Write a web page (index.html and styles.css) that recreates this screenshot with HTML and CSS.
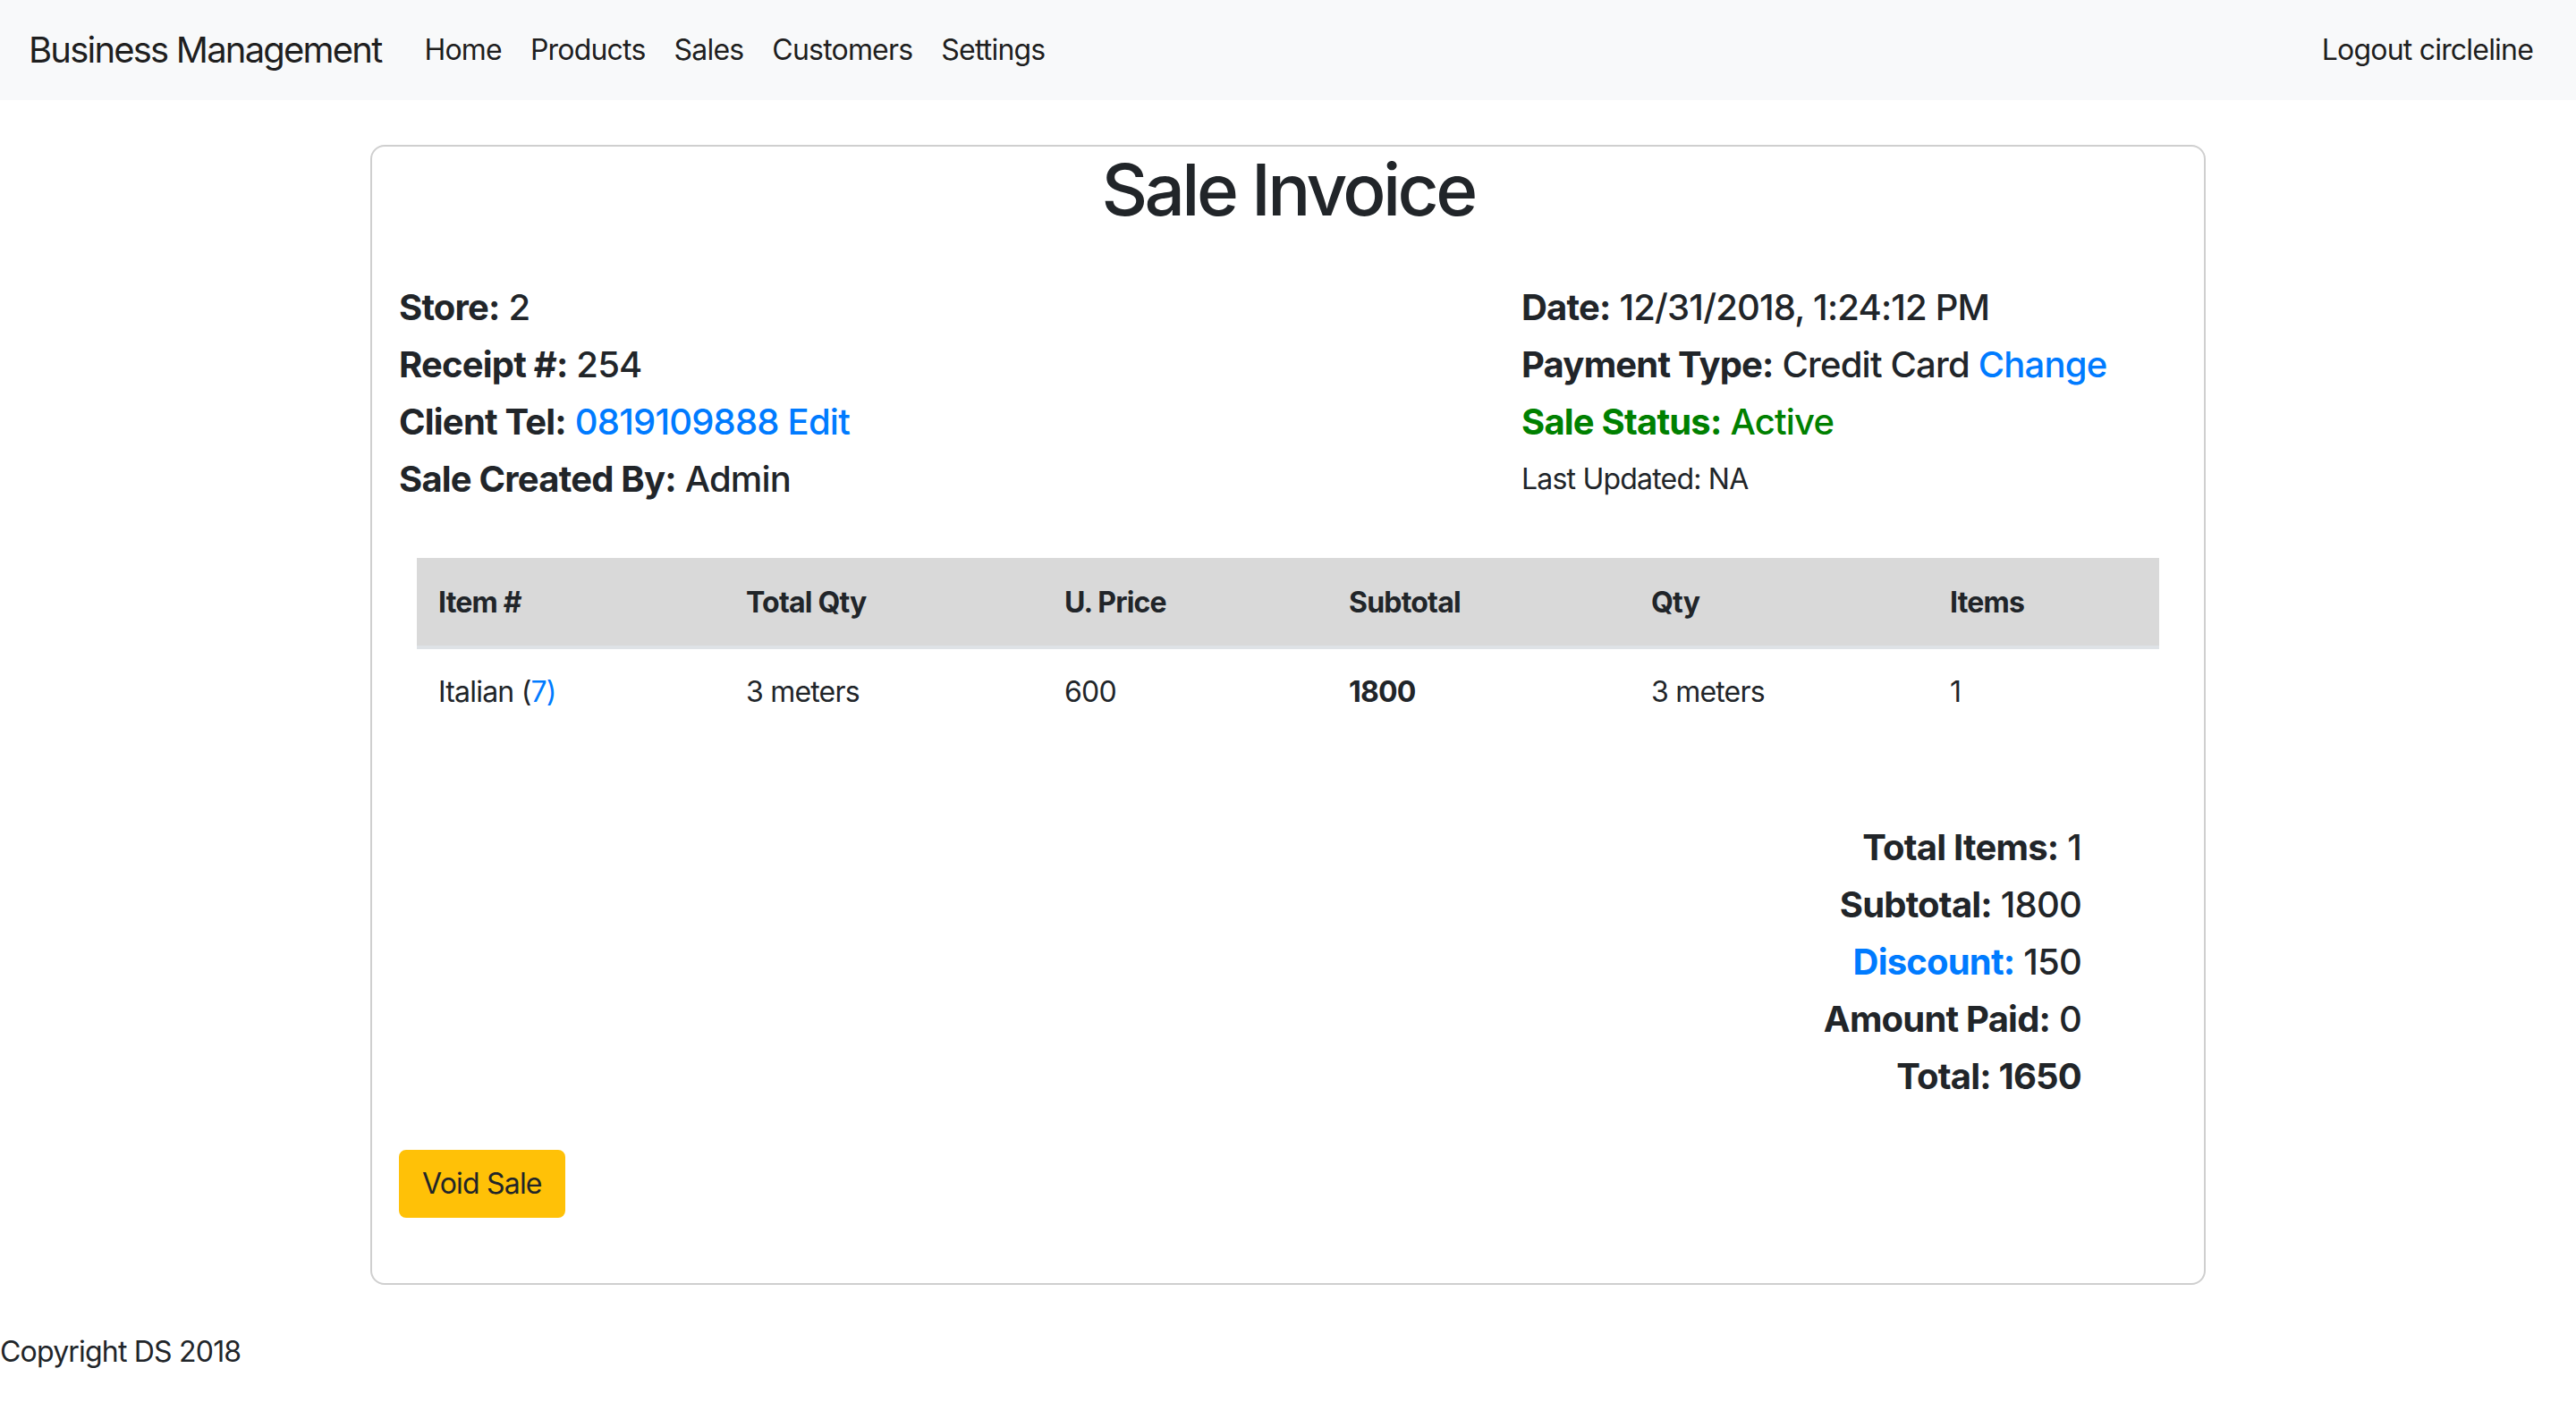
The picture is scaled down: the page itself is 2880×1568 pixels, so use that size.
FILE: index.html
```html
<!DOCTYPE html>
<html lang="en">
<head>
<meta charset="utf-8">
<title>Sale Invoice</title>
<link rel="stylesheet" href="styles.css">
</head>
<body>
<nav class="navbar">
  <a class="brand" href="#">Business Management</a>
  <ul class="nav-links">
    <li><a class="nav-link" href="#">Home</a></li>
    <li><a class="nav-link" href="#">Products</a></li>
    <li><a class="nav-link" href="#">Sales</a></li>
    <li><a class="nav-link" href="#">Customers</a></li>
    <li><a class="nav-link" href="#">Settings</a></li>
  </ul>
  <a class="nav-link logout" href="#">Logout circleline</a>
</nav>

<main class="main">
  <section class="card">
    <h1 class="title">Sale Invoice</h1>
    <div class="info">
      <div class="info-col">
        <h5 class="line"><b>Store:</b> 2</h5>
        <h5 class="line"><b>Receipt #:</b> 254</h5>
        <h5 class="line"><b>Client Tel:</b> <a class="link" href="#">0819109888 Edit</a></h5>
        <h5 class="line"><b>Sale Created By:</b> Admin</h5>
      </div>
      <div class="info-col">
        <h5 class="line"><b>Date:</b> 12/31/2018, 1:24:12 PM</h5>
        <h5 class="line"><b>Payment Type:</b> Credit Card <a class="link" href="#">Change</a></h5>
        <h5 class="line status"><b>Sale Status:</b> Active</h5>
        <p class="updated">Last Updated: NA</p>
      </div>
    </div>

    <table class="items">
      <thead>
        <tr>
          <th>Item #</th>
          <th>Total Qty</th>
          <th>U. Price</th>
          <th>Subtotal</th>
          <th>Qty</th>
          <th>Items</th>
        </tr>
      </thead>
      <tbody>
        <tr>
          <td>Italian (<a class="link" href="#">7)</a></td>
          <td>3 meters</td>
          <td>600</td>
          <td><b>1800</b></td>
          <td>3 meters</td>
          <td>1</td>
        </tr>
      </tbody>
    </table>

    <div class="totals">
      <h5 class="line"><b>Total Items:</b> 1</h5>
      <h5 class="line"><b>Subtotal:</b> 1800</h5>
      <h5 class="line"><a class="link strong" href="#">Discount:</a> 150</h5>
      <h5 class="line"><b>Amount Paid:</b> 0</h5>
      <h5 class="line"><b>Total: 1650</b></h5>
    </div>

    <button class="btn-void" type="button">Void Sale</button>
  </section>
</main>

<footer class="footer">Copyright DS 2018</footer>
</body>
</html>
```

FILE: styles.css
```css
* {
  box-sizing: border-box;
}

body {
  margin: 0;
  font-family: Inter, "Liberation Sans", sans-serif;
  font-size: 32px;
  line-height: 1.5;
  letter-spacing: -0.025em;
  color: #212529;
  background: #fff;
}

a {
  text-decoration: none;
}

.navbar {
  display: flex;
  align-items: center;
  height: 112px;
  padding: 0 32px;
  background: #f8f9fa;
}

.brand {
  font-size: 40px;
  line-height: 60px;
  letter-spacing: -0.045em;
  margin-right: 32px;
  color: rgba(0, 0, 0, 0.9);
}

.nav-links {
  display: flex;
  list-style: none;
  margin: 0;
  padding: 0;
}

.nav-link {
  display: block;
  padding: 0 16px;
  color: rgba(0, 0, 0, 0.9);
  line-height: 48px;
}

.logout {
  margin-left: auto;
}

.main {
  padding-top: 50px;
}

.card {
  width: 2052px;
  margin: 0 auto;
  border: 2px solid #cfcfcf;
  border-radius: 16px;
  padding-bottom: 73px;
}

.title {
  margin: 0;
  font-size: 80px;
  font-weight: 500;
  line-height: 96px;
  letter-spacing: -0.045em;
  text-align: center;
}

.info {
  display: grid;
  grid-template-columns: 1255px 1fr;
  padding: 60px 30px 0;
}

.line {
  margin: 0 0 16px;
  font-size: 40px;
  font-weight: 500;
  line-height: 48px;
}

.line b {
  font-weight: 700;
}

.link {
  color: #007bff;
}

.link.strong {
  font-weight: 700;
}

.status {
  color: #008000;
}

.updated {
  margin: 0;
  font-size: 32px;
  line-height: 48px;
}

.items {
  width: 1948px;
  margin: 48px 50px 0;
  border-collapse: collapse;
  table-layout: fixed;
}

.items th,
.items td {
  padding: 24px;
  text-align: left;
  line-height: 48px;
}

.items th {
  background: #d9d9d9;
  font-weight: 700;
  border-top: 2px solid #d9d9d9;
  border-bottom: 4px solid #dee2e6;
}

.items th:nth-child(1) { width: 344px; }
.items th:nth-child(2) { width: 356px; }
.items th:nth-child(3) { width: 318px; }
.items th:nth-child(4) { width: 338px; }
.items th:nth-child(5) { width: 334px; }
.items th:nth-child(6) { width: 258px; }

.totals {
  margin-top: 102px;
  padding-right: 137px;
  text-align: right;
}

.btn-void {
  display: block;
  margin: 58px 0 0 30px;
  padding: 12px 24px;
  font-family: inherit;
  font-size: 32px;
  line-height: 48px;
  letter-spacing: inherit;
  color: #212529;
  background: #ffc107;
  border: 2px solid #ffc107;
  border-radius: 8px;
}

.footer {
  margin-top: 51px;
  line-height: 48px;
}
```
